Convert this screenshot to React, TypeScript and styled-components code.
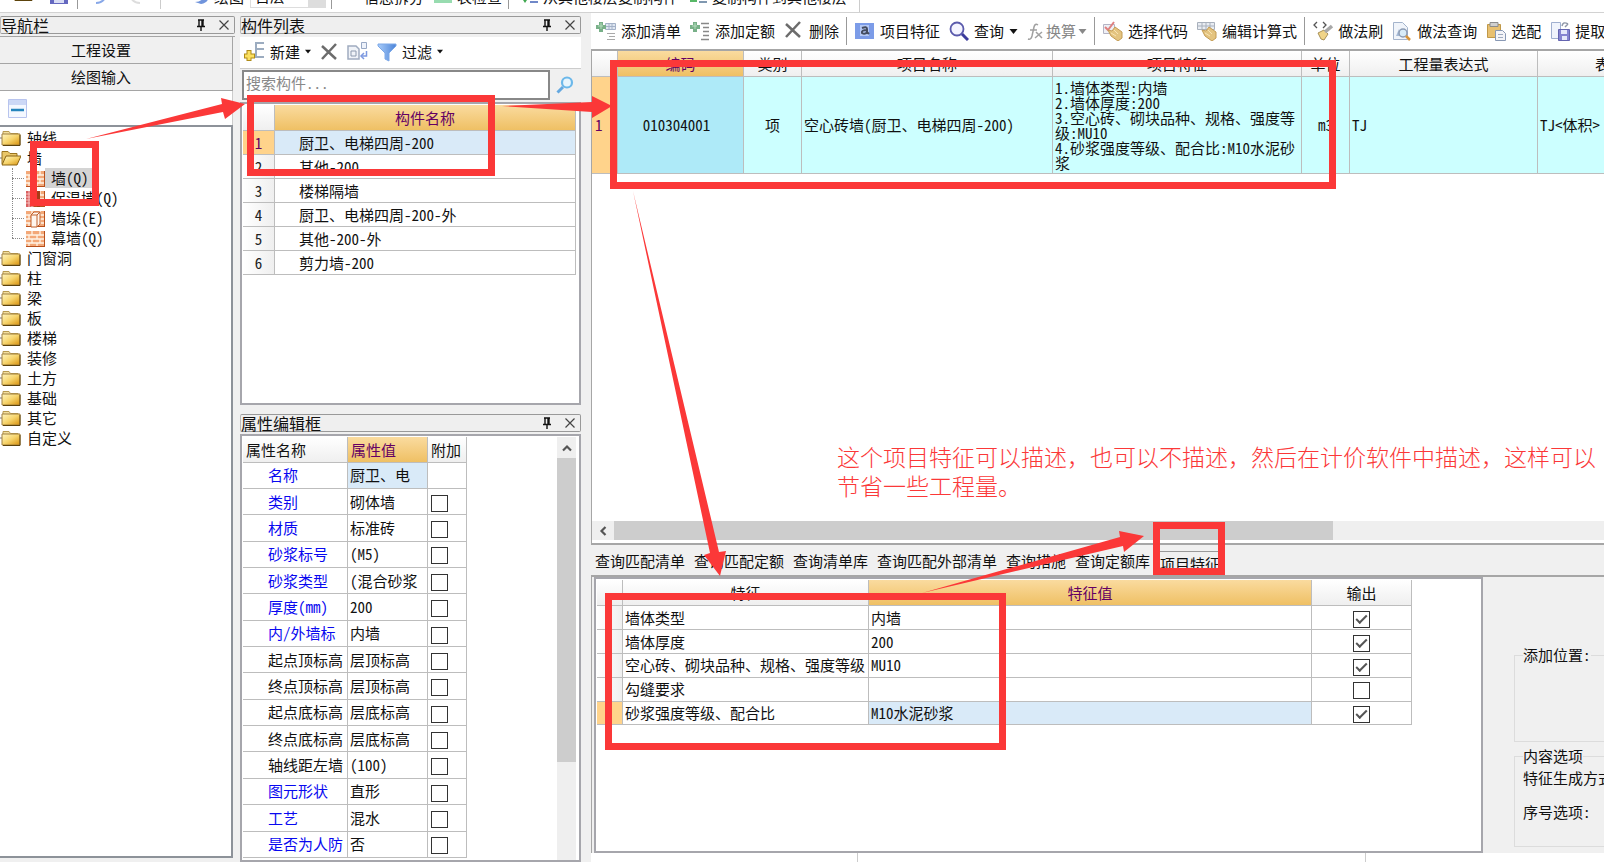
import React, { useState } from "react";
import styled, { createGlobalStyle, css } from "styled-components";

const GlobalStyle = createGlobalStyle`
  *, *::before, *::after { box-sizing: border-box; }
  body {
    margin: 0;
    overflow: hidden;
    background: #f0f0f0;
    color: #111;
    font: 15px/20px "Noto Sans Mono CJK SC", "Noto Sans CJK SC", "Liberation Sans", sans-serif;
  }
  button, input, select { font: inherit; color: inherit; }
  button { border: 0; padding: 0; background: none; white-space: nowrap; }
`;

/* ---------- shell ---------- */

const Shell = styled.div`
  position: relative;
  display: flex;
  flex-direction: column;
  height: 100vh;
  overflow: hidden;
`;

const TopStrip = styled.header`
  flex: none;
  height: 13px;
  display: flex;
  background: #fff;
  border-bottom: 1px solid #d2d2d2;
`;

const StripTools = styled.div`
  display: flex;
  align-items: flex-end;
  height: 12px;
  padding: 0 12px 0 12px;
  overflow: hidden;
  border-right: 1px solid #ccc;
`;

const StripButton = styled.button<{ $ml?: number }>`
  display: flex;
  align-items: flex-end;
  gap: 4px;
  margin: 0 0 5px ${(p) => p.$ml ?? 0}px;
  svg { margin-bottom: 3px; }
`;

const StripRule = styled.i<{ $ml: number; $dark?: boolean }>`
  width: 1px;
  height: 12px;
  margin: 0 0 3px ${(p) => p.$ml}px;
  background: ${(p) => (p.$dark ? "#999" : "#ccc")};
`;

const LevelSelect = styled.select`
  appearance: none;
  width: 76px;
  height: 24px;
  margin: 0 0 4px 6px;
  padding: 0 4px;
  border: 1px solid #ddd;
  border-radius: 0;
  background: linear-gradient(#ddd, #ddd) right / 17px 100% no-repeat, #fff;
`;

const Workspace = styled.div`
  flex: 1;
  min-height: 0;
  display: flex;
  gap: 5px;
`;

const Dock = styled.section<{ $width: number }>`
  flex: none;
  width: ${(p) => p.$width}px;
  display: flex;
  flex-direction: column;
  padding-top: 3px;
`;

const TitleBar = styled.div`
  flex: none;
  display: flex;
  align-items: center;
  gap: 11px;
  height: 18px;
  padding-right: 4px;
  border: 1px solid #999;
  border-left-color: #bbb;
  border-radius: 2px;
  background: #efefef;
  button { display: flex; }
`;

const Title = styled.h2`
  flex: 1;
  margin: 0;
  font-size: 16px;
  line-height: 16px;
  font-weight: 400;
`;

/* ---------- navigation ---------- */

const NavTab = styled.button`
  flex: none;
  height: 27px;
  margin-right: 2px;
  padding-right: 30px;
  background: #f0f0f0;
  border: solid #a5a5a5;
  border-width: 0 1px 1px 0;
`;

const NavTabs = styled.nav`
  flex: none;
  display: flex;
  flex-direction: column;
  margin-top: 2px;
  border-top: 1px solid #a5a5a5;
`;

const NavTools = styled.div`
  flex: none;
  height: 34px;
  margin-right: 2px;
  padding: 8px;
  background: #fff;
  border-right: 1px solid #ccc;
`;

const Tree = styled.ul`
  flex: 1;
  min-height: 0;
  margin: 0 2px 4px 0;
  padding: 1px 0;
  list-style: none;
  background: #fff;
  border: solid #8d9299;
  border-width: 2px 2px 2px 0;
  overflow: hidden;
`;

const TreeChildren = styled.ul`
  position: relative;
  margin: 0;
  padding: 0 0 0 26px;
  list-style: none;
  &::before {
    content: "";
    position: absolute;
    left: 12px;
    top: 0;
    bottom: 10px;
    border-left: 1px dotted #888;
  }
  li { position: relative; }
  li::before {
    content: "";
    position: absolute;
    left: -14px;
    top: 10px;
    width: 12px;
    border-top: 1px dotted #888;
  }
`;

const TreeItem = styled.button<{ $selected?: boolean }>`
  display: flex;
  align-items: center;
  height: 20px;
  span {
    padding: 0 6px;
    background: ${(p) => (p.$selected ? "#d4d4d4" : "transparent")};
  }
  svg { flex: none; }
`;

/* ---------- component list ---------- */

const ListTools = styled.div`
  flex: none;
  display: flex;
  align-items: center;
  gap: 9px;
  height: 32px;
  margin-top: 3px;
  padding: 0 4px 2px;
  background: #fff;
  border-bottom: 1px solid #ccc;
`;

const ToolButton = styled.button<{ $muted?: boolean }>`
  flex: none;
  display: flex;
  align-items: center;
  gap: ${(p) => (p.$muted ? 2 : 5)}px;
  color: ${(p) => (p.$muted ? "#888" : "#111")};
`;

const SearchRow = styled.form`
  flex: none;
  display: flex;
  height: 33px;
  padding: 1px 1px 2px 2px;
  button { width: 30px; display: grid; place-items: center; }
`;

const SearchInput = styled.input`
  flex: 1;
  min-width: 0;
  height: 30px;
  padding: 0 2px 6px;
  border: 2px solid #888;
  border-radius: 0;
  background: #fff;
  &::placeholder { color: #888; opacity: 1; }
`;

const Box = styled.div<{ $fixed?: number }>`
  ${(p) => (p.$fixed ? css`flex: none; height: ${p.$fixed}px;` : css`flex: 1;`)}
  min-height: 0;
  min-width: 0;
  display: flex;
  align-items: flex-start;
  justify-content: space-between;
  padding: 1px 3px 0 1px;
  background: #fff;
  border: 2px solid #a6a6ac;
  overflow: hidden;
`;

const Grid = styled.table<{ $height?: number; $width?: string }>`
  width: ${(p) => p.$width ?? "100%"};
  height: ${(p) => (p.$height ? `${p.$height}px` : "auto")};
  flex: none;
  table-layout: fixed;
  border-collapse: separate;
  border-spacing: 0;
  white-space: nowrap;
`;

const Th = styled.th<{ $active?: boolean; $left?: boolean }>`
  height: 26px;
  padding: 0 0 0 ${(p) => (p.$left ? 3 : 0)}px;
  font-weight: 400;
  text-align: ${(p) => (p.$left ? "left" : "center")};
  overflow: hidden;
  color: ${(p) => (p.$active ? "#640064" : "#111")};
  background: ${(p) =>
    p.$active ? "linear-gradient(#fadb9f, #efc064)" : "linear-gradient(#fff, #efefef)"};
  border: solid #bdbdbd;
  border-width: 0 1px 1px 0;
`;

const RowHead = styled.th<{ $active?: boolean; $left?: boolean }>`
  padding: 0 0 0 ${(p) => (p.$left ? 3 : 0)}px;
  font-weight: 400;
  text-align: ${(p) => (p.$left ? "left" : "center")};
  color: ${(p) => (p.$active ? "#640064" : "#222")};
  background: ${(p) => (p.$active ? "#ffd38b" : "linear-gradient(90deg, #fff, #efefef)")};
  border: solid #bdbdbd;
  border-width: 0 1px 1px 0;
`;

const Td = styled.td<{ $bg?: string; $indent?: number; $center?: boolean; $blue?: boolean }>`
  padding: 0 0 0 ${(p) => (p.$center ? 0 : p.$indent ?? 2)}px;
  overflow: hidden;
  line-height: 20px;
  text-align: ${(p) => (p.$center ? "center" : "left")};
  color: ${(p) => (p.$blue ? "#0808f0" : "#111")};
  background: ${(p) => p.$bg ?? "#fff"};
  border: solid #bdbdbd;
  border-width: 0 1px 1px 0;
`;

const CodeTd = styled(Td)`
  padding-right: 8px;
`;

const Check = styled.input.attrs({ type: "checkbox" })`
  appearance: none;
  position: relative;
  display: inline-block;
  width: 17px;
  height: 17px;
  margin: 0 2px;
  border: 1px solid #333;
  background: #fff;
  vertical-align: middle;
  &:checked::after {
    content: "";
    position: absolute;
    left: 2px;
    top: 3px;
    width: 11px;
    height: 6px;
    border: solid #555;
    border-width: 0 0 2px 2px;
    transform: rotate(-45deg);
  }
`;

const VScroll = styled.div`
  align-self: stretch;
  width: 19px;
  background: #efefef;
  button { display: grid; place-items: center; width: 19px; height: 21px; }
`;

const VThumb = styled.div`
  height: 304px;
  background: #cdcdcd;
`;

/* ---------- measure editor ---------- */

const Editor = styled.main`
  flex: 1;
  min-width: 0;
  display: flex;
  flex-direction: column;
  padding-left: 5px;
`;

const EditorTools = styled.div`
  flex: none;
  display: flex;
  align-items: center;
  gap: 9px;
  height: 36px;
  padding-left: 5px;
  background: #fff;
  overflow: hidden;
`;

const ToolRule = styled.i`
  flex: none;
  width: 1px;
  height: 28px;
  margin: 0 -1px 0 -2px;
  background: #999;
`;

const MeasureBox = styled.div`
  flex: 495 0 0;
  min-height: 0;
  display: flex;
  flex-direction: column;
  background: #fff;
  border: solid #a6a6a6;
  border-width: 2px 0 2px 1px;
  overflow: hidden;
`;

const MeasureBody = styled.div`
  flex: 1;
  min-height: 0;
`;

const FeatureLine = styled.div`
  line-height: 15px;
`;

const HScroll = styled.div`
  flex: none;
  display: flex;
  height: 19px;
  margin-bottom: 3px;
  background: #efefef;
  button { display: grid; place-items: center; width: 22px; height: 19px; }
`;

const HThumb = styled.div`
  width: 71%;
  background: #cdcdcd;
`;

const Tabs = styled.div`
  flex: none;
  display: flex;
  align-items: flex-end;
  height: 32px;
  border-bottom: 2px solid #a6a6a6;
`;

const Tab = styled.button<{ $selected?: boolean }>`
  height: ${(p) => (p.$selected ? 24 : 26)}px;
  padding: ${(p) => (p.$selected ? "0 4px" : "0 4px 2px")};
  border: solid ${(p) => (p.$selected ? "#999" : "transparent")};
  border-width: ${(p) => (p.$selected ? "1px 1px 0 1px" : "0 1px 0 0")};
`;

const Detail = styled.div`
  flex: 277 0 0;
  min-height: 0;
  display: flex;
  padding-left: 2px;
  border-left: 1px solid #a6a6a6;
`;

const SidePanel = styled.aside`
  flex: none;
  width: 121px;
  padding: 68px 0 0 31px;
  overflow: hidden;
`;

const Group = styled.fieldset<{ $height: number }>`
  width: 240px;
  height: ${(p) => p.$height}px;
  margin: 0 0 4px;
  padding: 2px 8px;
  border: 1px solid #dcdcdc;
  legend { padding: 0; }
  p { margin: 0 0 14px; white-space: nowrap; }
`;

const Footer = styled.footer`
  flex: none;
  display: flex;
  height: 9px;
  padding-left: 266px;
  background: #fff;
`;

const FooterCell = styled.div`
  width: 509px;
  border: solid #ccc;
  border-width: 0 1px;
`;

/* ---------- annotations ---------- */

const Marks = styled.svg`
  position: absolute;
  inset: 0;
  width: 100%;
  height: 100%;
  pointer-events: none;
`;

const Note = styled.p`
  position: absolute;
  left: 837px;
  top: 442px;
  margin: 0;
  color: #fb3838;
  font-family: "Noto Sans CJK SC", sans-serif;
  font-weight: 300;
  font-size: 23px;
  line-height: 29px;
  white-space: nowrap;
`;

/* ---------- icons ---------- */

const Svg = ({ size = 20, children }: { size?: number; children: React.ReactNode }) => (
  <svg width={size} height={size} viewBox={`0 0 ${size} ${size}`} fill="none" aria-hidden="true">
    {children}
  </svg>
);

const PinIcon = () => (
  <Svg size={12}>
    <path d="M3 1h6M4 1v6M8 1v6M7 1v6M2 7.500h8M6 8v4" stroke="#111" strokeWidth="1.400" />
  </Svg>
);
const CloseIcon = () => (
  <Svg size={12}>
    <path d="M1.500 1.500l9 9M10.500 1.500l-9 9" stroke="#444" strokeWidth="1.200" />
  </Svg>
);
const Caret = ({ color = "#111", size = 9 }: { color?: string; size?: number }) => (
  <svg width={size} height="5" viewBox="0 0 8 5" aria-hidden="true">
    <path d="M0 0h8L4 5z" fill={color} />
  </svg>
);
const Gradients = () => (
  <svg width="0" height="0" style={{ position: "absolute" }} aria-hidden="true">
    <defs>
      <linearGradient id="folder" x1="0" y1="0" x2="1" y2="1">
        <stop offset="0" stopColor="#fff6c0" />
        <stop offset=".5" stopColor="#f6d46c" />
        <stop offset="1" stopColor="#d8900c" />
      </linearGradient>
      <linearGradient id="funnel" x1="0" y1="0" x2="1" y2="0">
        <stop offset="0" stopColor="#a8ccfa" />
        <stop offset="1" stopColor="#4c84d8" />
      </linearGradient>
    </defs>
  </svg>
);
const FolderIcon = () => (
  <Svg size={21}>
    <path d="M0 10h2" stroke="#777" />
    <path d="M3 6V3.500h6l1.500 2H18V8" fill="#f2dfa0" stroke="#b79a50" />
    <path d="M2 6h18v11H2z" fill="url(#folder)" stroke="#a08040" />
    <path d="M3 17.500h17V7" stroke="#5c430c" />
  </Svg>
);
const FolderOpenIcon = () => (
  <Svg size={21}>
    <path d="M0 10h2" stroke="#777" />
    <path d="M2 16V3.500h6l2 2h7V9" fill="#e9c668" stroke="#9a7420" />
    <path d="M2 17L6 8h15l-4 9z" fill="url(#folder)" stroke="#8a6414" />
  </Svg>
);
const BrickIcon = ({ kind = "wall" }: { kind?: string }) => (
  <Svg size={19}>
    <path d="M0 2h19v16H0z" fill="#f3a878" />
    <path d="M0 6h19M0 10h19M0 14h19M6 2v4M14 2v4M3 6v4M11 6v4M6 10v4M14 10v4M3 14v4M11 14v4" stroke="#fff3e6" strokeWidth="1.300" />
    <path d="M0 17.500h19M18.500 2v16" stroke="#b8501c" />
    {kind === "insulated" && (
      <>
        <path d="M0 2h8v16H0z" fill="#d86060" />
        <path d="M0 5h8M0 8h8M0 11h8M0 14h8M3 2v16M6 2v16" stroke="#f8c0c0" />
        <path d="M11 2h3v16h-3z" fill="#a83c18" />
      </>
    )}
    {kind === "pier" && (
      <path d="M5 6l3-3h6v12l-3 3H5zM11 6v12M11 6l3-3M5 6h6" fill="#fff6ee" stroke="#c0602c" />
    )}
  </Svg>
);
const CollapseIcon = () => (
  <Svg size={19}>
    <path d="M.5.5h18v18H.5z" fill="#f4f8ff" stroke="#b8c4ee" />
    <path d="M1 1h17v5H1z" fill="#ccd8f6" />
    <path d="M3 11h13" stroke="#2484bc" strokeWidth="2.500" />
  </Svg>
);
const NewIcon = () => (
  <Svg size={21}>
    <path d="M20 2h-8v6h8M12 8v8h8" stroke="#9cacc0" strokeWidth="2" />
    <path d="M5 9v11M0 15h11" stroke="#b08c18" strokeWidth="5" />
    <path d="M5 10v9M1 15h9" stroke="#fbe060" strokeWidth="3" />
  </Svg>
);
const DeleteIcon = ({ size = 18 }: { size?: number }) => (
  <Svg size={size}>
    <path d="M2 3l14 13M16 1L2 16" stroke="#6c6c6c" strokeWidth="2.500" />
  </Svg>
);
const CopyIcon = () => (
  <Svg size={21}>
    <path d="M1 5h8l3 3v10H1z" fill="#f0f3f8" stroke="#a0acc0" strokeWidth="1.500" />
    <path d="M4 10h5v5H4z" stroke="#8e9aae" />
    <path d="M14.500 1.500h5v6h-5z" fill="#eef2fa" stroke="#98a8c4" />
    <path d="M19.500 10v5h-4M17 12l-3 3 3 3" stroke="#7c98e0" strokeWidth="1.500" />
  </Svg>
);
const FunnelIcon = () => (
  <Svg size={20}>
    <path d="M1 2h18v2l-7 7v8l-4-2v-6L1 4z" fill="url(#funnel)" stroke="#7ca8e8" />
  </Svg>
);
const SearchIcon = () => (
  <Svg size={18}>
    <circle cx="11" cy="6.500" r="5" fill="#e8f5fd" stroke="#6cb8ea" strokeWidth="2.200" />
    <path d="M7 11l-5.500 5.500" stroke="#64a8e0" strokeWidth="3" />
  </Svg>
);
const AddListIcon = () => (
  <Svg>
    <path d="M9.500 2.500h10v6h-10z" fill="#dfe7f2" stroke="#a4b2c8" />
    <path d="M10 5.500h9M13 3v5M16 3v5" stroke="#a4b2c8" />
    <path d="M11 12.500h8M13 15.500h6M11 18.500h8" stroke="#aaa" />
    <path d="M5 1v10M0 6h10" stroke="#78b088" strokeWidth="4" />
    <path d="M5 2v6M2 5h5" stroke="#b4dcbc" />
  </Svg>
);
const AddQuotaIcon = () => (
  <Svg>
    <path d="M11 2.500h8M13 6.500h6M13 10.500h6M13 14.500h6M11 18.500h8" stroke="#888" strokeWidth="1.400" />
    <path d="M5 1v10M0 6h10" stroke="#78b088" strokeWidth="4" />
    <path d="M5 2v6M2 5h5" stroke="#b4dcbc" />
  </Svg>
);
const FeatureIcon = () => (
  <Svg>
    <path d="M0 2h19v16H0z" fill="#7c9ce8" />
    <path d="M5 4h9v11H5z" fill="#b4c8f4" />
    <path d="M7 7q5-2 5 1v5M12 9q-6 0-5 3 3 2 5-1l2 2" stroke="#444c60" strokeWidth="2" />
  </Svg>
);
const QueryIcon = () => (
  <Svg>
    <circle cx="8" cy="8" r="6.500" fill="#f4f4ff" stroke="#5a5aac" strokeWidth="1.800" />
    <path d="M13 13l6 6" stroke="#3c3c9c" strokeWidth="3" />
  </Svg>
);
const FxIcon = () => (
  <Svg size={17}>
    <path d="M11 2q-3-2-4 2L5 13q-1 4-4 3M3 7h7M9 9l6 6M15 9l-7 6" stroke="#a0a0a0" strokeWidth="1.500" />
  </Svg>
);
const HandIcon = ({ sheet }: { sheet?: boolean }) => (
  <Svg>
    {sheet ? (
      <>
        <path d="M.5 1.500h17v7H.5z" fill="#e8ecf2" stroke="#a8b0bc" />
        <path d="M1 5h16M5 2v6M9 2v6M13 2v6" stroke="#a8b0bc" />
      </>
    ) : (
      <>
        <path d="M.5 3.500h11v9H.5z" fill="#eef0f6" stroke="#b4b4c4" />
        <path d="M2 6l3 3 6-8" stroke="#e08080" strokeWidth="2" />
      </>
    )}
    <path d="M5 9l4 1 3-4 7 5v6l-4 3-7-5z" fill="#e4c480" stroke="#c49c54" />
    <path d="M8 12l5 3M11 9l4 4" stroke="#f8e4b4" />
  </Svg>
);
const BrushIcon = () => (
  <Svg>
    <path d="M4 1L1 4l3 3M10 1l3 3-3 3" stroke="#555" strokeWidth="1.300" />
    <path d="M5 12l6-3 4 4-4 6-3-1z" fill="#f0d488" stroke="#a89058" />
    <path d="M12 11l7-6" stroke="#a8a8a8" strokeWidth="3.500" />
  </Svg>
);
const DocQueryIcon = () => (
  <Svg>
    <path d="M1.500 1.500h9l5 5v12h-14z" fill="#f0f4fa" stroke="#a4b4cc" />
    <path d="M4 15l3-7 3 7z" fill="#a8bcd8" />
    <circle cx="11" cy="12" r="4" fill="#d8ecf8" stroke="#8c9cb4" strokeWidth="1.500" />
    <path d="M14 15l4 4" stroke="#d89438" strokeWidth="2.500" />
  </Svg>
);
const PasteIcon = () => (
  <Svg>
    <path d="M1.500 3.500h13v13h-13z" fill="#e8c070" stroke="#c09848" />
    <path d="M4 1.500h8v4H4z" fill="#d0d0d0" stroke="#8c8c8c" />
    <path d="M9.500 9.500h7l3 3v7h-10z" fill="#f4f4f8" stroke="#8898b4" />
    <path d="M12 13.500h5M12 16.500h5" stroke="#a0acc0" />
  </Svg>
);
const ExtractIcon = () => (
  <Svg>
    <path d="M1.500 1.500h9v16h-9z" fill="#f0f4fc" stroke="#a0b0d0" />
    <path d="M12 5q1-5 6-2M18 3l-3 3" stroke="#9098a8" strokeWidth="1.500" />
    <path d="M8.500 8.500h11v11h-11z" fill="#8484d0" stroke="#6464b0" />
    <path d="M11 9h6v4h-6zM12 15h5v4h-5z" fill="#e4e8fa" />
  </Svg>
);
const Chevron = ({ dir }: { dir: "up" | "left" }) => (
  <Svg size={12}>
    <path d={dir === "up" ? "M2 8.500l4-4 4 4" : "M8.500 2l-4 4 4 4"} stroke="#555" strokeWidth="2.200" />
  </Svg>
);

/* ---------- data ---------- */

const folders = ["门窗洞", "柱", "梁", "板", "楼梯", "装修", "土方", "基础", "其它", "自定义"];
const walls = [
  ["墙(Q)", "wall"],
  ["保温墙(Q)", "insulated"],
  ["墙垛(E)", "pier"],
  ["幕墙(Q)", "wall"],
];
const components = ["厨卫、电梯四周-200", "其他-200", "楼梯隔墙", "厨卫、电梯四周-200-外", "其他-200-外", "剪力墙-200"];
const properties: [string, string, boolean][] = [
  ["名称", "厨卫、电", true],
  ["类别", "砌体墙", true],
  ["材质", "标准砖", true],
  ["砂浆标号", "(M5)", true],
  ["砂浆类型", "(混合砂浆", true],
  ["厚度(mm)", "200", true],
  ["内/外墙标", "内墙", true],
  ["起点顶标高", "层顶标高", false],
  ["终点顶标高", "层顶标高", false],
  ["起点底标高", "层底标高", false],
  ["终点底标高", "层底标高", false],
  ["轴线距左墙", "(100)", false],
  ["图元形状", "直形", true],
  ["工艺", "混水", true],
  ["是否为人防", "否", true],
];
const description = [
  "1.墙体类型:内墙",
  "2.墙体厚度:200",
  "3.空心砖、砌块品种、规格、强度等",
  "级:MU10",
  "4.砂浆强度等级、配合比:M10水泥砂",
  "浆",
];
const tabs = ["查询匹配清单", "查询匹配定额", "查询清单库", "查询匹配外部清单", "查询措施", "查询定额库", "项目特征"];
const features: [string, string, boolean][] = [
  ["墙体类型", "内墙", true],
  ["墙体厚度", "200", true],
  ["空心砖、砌块品种、规格、强度等级", "MU10", true],
  ["勾缝要求", "", false],
  ["砂浆强度等级、配合比", "M10水泥砂浆", true],
];

const PanelTitle = ({ children }: { children: string }) => (
  <TitleBar>
    <Title>{children}</Title>
    <button aria-label="固定"><PinIcon /></button>
    <button aria-label="关闭"><CloseIcon /></button>
  </TitleBar>
);

const Navigation = () => (
  <Dock $width={235}>
    <PanelTitle>导航栏</PanelTitle>
    <NavTabs>
      <NavTab>工程设置</NavTab>
      <NavTab>绘图输入</NavTab>
    </NavTabs>
    <NavTools>
      <button aria-label="折叠"><CollapseIcon /></button>
    </NavTools>
    <Tree>
      <li><TreeItem><FolderIcon /><span>轴线</span></TreeItem></li>
      <li>
        <TreeItem><FolderOpenIcon /><span>墙</span></TreeItem>
        <TreeChildren>
          {walls.map(([name, kind], i) => (
            <li key={name}>
              <TreeItem $selected={i === 0}><BrickIcon kind={kind} /><span>{name}</span></TreeItem>
            </li>
          ))}
        </TreeChildren>
      </li>
      {folders.map((name) => (
        <li key={name}><TreeItem><FolderIcon /><span>{name}</span></TreeItem></li>
      ))}
    </Tree>
  </Dock>
);

const ComponentList = () => (
  <>
    <PanelTitle>构件列表</PanelTitle>
    <ListTools>
      <ToolButton><NewIcon />新建<Caret size={6} /></ToolButton>
      <ToolButton aria-label="删除"><DeleteIcon /></ToolButton>
      <ToolButton aria-label="复制"><CopyIcon /></ToolButton>
      <ToolButton><FunnelIcon />过滤<Caret size={6} /></ToolButton>
    </ListTools>
    <SearchRow onSubmit={(e) => e.preventDefault()}>
      <SearchInput aria-label="搜索构件" placeholder="搜索构件..." />
      <button aria-label="搜索"><SearchIcon /></button>
    </SearchRow>
    <Box $fixed={303}>
      <Grid $height={170}>
        <colgroup><col style={{ width: 32 }} /><col /></colgroup>
        <thead><tr><Th /><Th $active>构件名称</Th></tr></thead>
        <tbody>
          {components.map((name, i) => (
            <tr key={name}>
              <RowHead $active={i === 0}>{i + 1}</RowHead>
              <Td $indent={24} $bg={i === 0 ? "#d9eaf8" : undefined}>{name}</Td>
            </tr>
          ))}
        </tbody>
      </Grid>
    </Box>
  </>
);

const PropertyBox = styled(Box)`
  margin-top: 2px;
`;

const PropertyEditor = () => (
  <>
    <PanelTitle>属性编辑框</PanelTitle>
    <PropertyBox>
      <Grid $width="224px" $height={421}>
        <colgroup><col style={{ width: 105 }} /><col style={{ width: 80 }} /><col style={{ width: 39 }} /></colgroup>
        <thead><tr><Th $left>属性名称</Th><Th $left $active>属性值</Th><Th $left>附加</Th></tr></thead>
        <tbody>
          {properties.map(([name, value, blue], i) => (
            <tr key={name}>
              <Td $indent={25} $blue={blue}>{name}</Td>
              <Td $bg={i === 0 ? "#d9eaf8" : undefined}>{value}</Td>
              <Td $indent={1}>{i > 0 && <Check aria-label={`附加 ${name}`} />}</Td>
            </tr>
          ))}
        </tbody>
      </Grid>
      <VScroll>
        <button aria-label="向上滚动"><Chevron dir="up" /></button>
        <VThumb />
      </VScroll>
    </PropertyBox>
  </>
);

const MiddleDock = styled(Dock)`
  & > ${TitleBar} ~ ${TitleBar} { margin-top: 9px; }
`;

const Toolbar = () => (
  <EditorTools>
    <ToolButton><AddListIcon />添加清单</ToolButton>
    <ToolButton><AddQuotaIcon />添加定额</ToolButton>
    <ToolButton><DeleteIcon size={20} />删除</ToolButton>
    <ToolRule />
    <ToolButton><FeatureIcon />项目特征</ToolButton>
    <ToolButton><QueryIcon />查询<Caret /></ToolButton>
    <ToolButton $muted><FxIcon />换算<Caret color="#888" /></ToolButton>
    <ToolRule />
    <ToolButton><HandIcon />选择代码</ToolButton>
    <ToolButton><HandIcon sheet />编辑计算式</ToolButton>
    <ToolRule />
    <ToolButton><BrushIcon />做法刷</ToolButton>
    <ToolButton><DocQueryIcon />做法查询</ToolButton>
    <ToolButton><PasteIcon />选配</ToolButton>
    <ToolButton><ExtractIcon />提取做法</ToolButton>
  </EditorTools>
);

const measureColumns = [26, 126, 58, 251, 249, 48, 188, 190];

const MeasureGrid = () => (
  <MeasureBox>
    <MeasureBody>
      <Grid $width="1136px">
        <colgroup>{measureColumns.map((w, i) => <col key={i} style={{ width: w }} />)}</colgroup>
        <thead>
          <tr>
            <Th /><Th $active>编码</Th><Th>类别</Th><Th>项目名称</Th><Th>项目特征</Th>
            <Th>单位</Th><Th>工程量表达式</Th><Th>表达式说明</Th>
          </tr>
        </thead>
        <tbody>
          <tr style={{ height: 97 }}>
            <RowHead $active $left>1</RowHead>
            <CodeTd $center $bg="#aeeaf8">010304001</CodeTd>
            <Td $center $bg="#ccffff">项</Td>
            <Td $bg="#ccffff">空心砖墙(厨卫、电梯四周-200)</Td>
            <Td $bg="#ccffff">{description.map((t) => <FeatureLine key={t}>{t}</FeatureLine>)}</Td>
            <Td $center $bg="#ccffff">m3</Td>
            <Td $bg="#ccffff">TJ</Td>
            <Td $bg="#ccffff">{"TJ<体积>"}</Td>
          </tr>
        </tbody>
      </Grid>
    </MeasureBody>
    <HScroll>
      <button aria-label="向左滚动"><Chevron dir="left" /></button>
      <HThumb />
    </HScroll>
  </MeasureBox>
);

const FeatureGrid = () => {
  const [rows, setRows] = useState(features);
  const toggle = (index: number) =>
    setRows(rows.map((r, i) => (i === index ? [r[0], r[1], !r[2]] : r)));
  return (
    <Box>
      <Grid $width="815px" $height={145}>
        <colgroup>
          <col style={{ width: 26 }} /><col style={{ width: 246 }} /><col style={{ width: 443 }} /><col style={{ width: 100 }} />
        </colgroup>
        <thead><tr><Th /><Th>特征</Th><Th $active>特征值</Th><Th>输出</Th></tr></thead>
        <tbody>
          {rows.map(([name, value, on], i) => (
            <tr key={name}>
              <RowHead $active={i === 4} />
              <Td>{name}</Td>
              <Td $bg={i === 4 ? "#d9eaf8" : undefined}>{value}</Td>
              <Td $center><Check aria-label={`输出 ${name}`} checked={on} onChange={() => toggle(i)} /></Td>
            </tr>
          ))}
        </tbody>
      </Grid>
    </Box>
  );
};

const Annotations = () => (
  <>
    <Marks aria-hidden="true">
      <g fill="none" stroke="#fb3838" strokeWidth="7">
        <rect x="33.500" y="144.500" width="62" height="58" />
        <rect x="250.500" y="98.500" width="241" height="74" />
        <rect x="613.500" y="63.500" width="719" height="122" />
        <rect x="608.500" y="596.500" width="394" height="150" />
        <rect x="1156.500" y="525.500" width="65" height="46" />
      </g>
      <g fill="#fb3838">
        <path d="M86 139L222 104 221 98 245 104 225 119 223 112z" />
        <path d="M502 106L592 102V96L612 106 592 118V112z" />
        <path d="M633 191L719 552 726 551 720 576 704 555 710 553z" />
        <path d="M922 593L1120 537 1119 531 1144 536 1124 552 1123 546z" />
      </g>
    </Marks>
    <Note>
      这个项目特征可以描述，也可以不描述，然后在计价软件中描述，这样可以<br />
      节省一些工程量。
    </Note>
  </>
);

const Strip = () => (
  <TopStrip>
    <StripTools>
      <StripButton aria-label="打开"><FolderIcon /></StripButton>
      <StripButton aria-label="保存" $ml={17}><Svg size={18}><path d="M0 0h18v18H0z" fill="#6468c0" /><path d="M4 9h10v8H4z" fill="#d8dcf4" /></Svg></StripButton>
      <StripRule $ml={9} $dark />
      <StripButton aria-label="撤销" $ml={16}><Svg size={14}><path d="M2 13q6 0 9-5" stroke="#88a8e8" strokeWidth="2" /></Svg></StripButton>
      <StripButton aria-label="重做" $ml={20}><Svg size={14}><path d="M3 8q3 5 9 5" stroke="#ddd" strokeWidth="2" /></Svg></StripButton>
      <StripRule $ml={18} />
      <StripButton $ml={33}><Svg size={16}><path d="M1 14q6 0 8-4l5-6q3 10-7 12z" fill="#7094dc" /></Svg>绘图</StripButton>
      <LevelSelect aria-label="楼层"><option>首层</option></LevelSelect>
      <StripRule $ml={5} $dark />
      <StripButton $ml={32}>信息拆分</StripButton>
      <StripButton $ml={9}><Svg><path d="M1 1h18v18H1z" fill="#98dcb0" /><path d="M4 13h12v3H4z" fill="#d8f4e0" /></Svg>表检查</StripButton>
      <StripRule $ml={6} $dark />
      <StripButton $ml={10}><Svg><path d="M2 13h8l-4 6z" fill="#40a850" /><path d="M11 10h8M11 14h8M11 18h8" stroke="#7088c8" strokeWidth="2" /></Svg>从其他楼层复制构件</StripButton>
      <StripButton $ml={10}><Svg><path d="M2 11h7v7H2z" fill="#58b868" /><path d="M11 10h8M11 14h8M11 18h8" stroke="#8098b0" strokeWidth="2" /></Svg>复制构件到其他楼层</StripButton>
    </StripTools>
  </TopStrip>
);

export default function App() {
  return (
    <Shell>
      <GlobalStyle />
      <Gradients />
      <Strip />
      <Workspace>
        <Navigation />
        <MiddleDock $width={341}>
          <ComponentList />
          <PropertyEditor />
        </MiddleDock>
        <Editor>
          <Toolbar />
          <MeasureGrid />
          <Tabs role="tablist">
            {tabs.map((name, i) => (
              <Tab key={name} role="tab" aria-selected={i === 6} $selected={i === 6}>{name}</Tab>
            ))}
          </Tabs>
          <Detail>
            <FeatureGrid />
            <SidePanel>
              <Group $height={97}><legend>添加位置:</legend></Group>
              <Group $height={101}>
                <legend>内容选项</legend>
                <p>特征生成方式:</p>
                <p>序号选项:</p>
              </Group>
            </SidePanel>
          </Detail>
          <Footer><FooterCell /></Footer>
        </Editor>
      </Workspace>
      <Annotations />
    </Shell>
  );
}
